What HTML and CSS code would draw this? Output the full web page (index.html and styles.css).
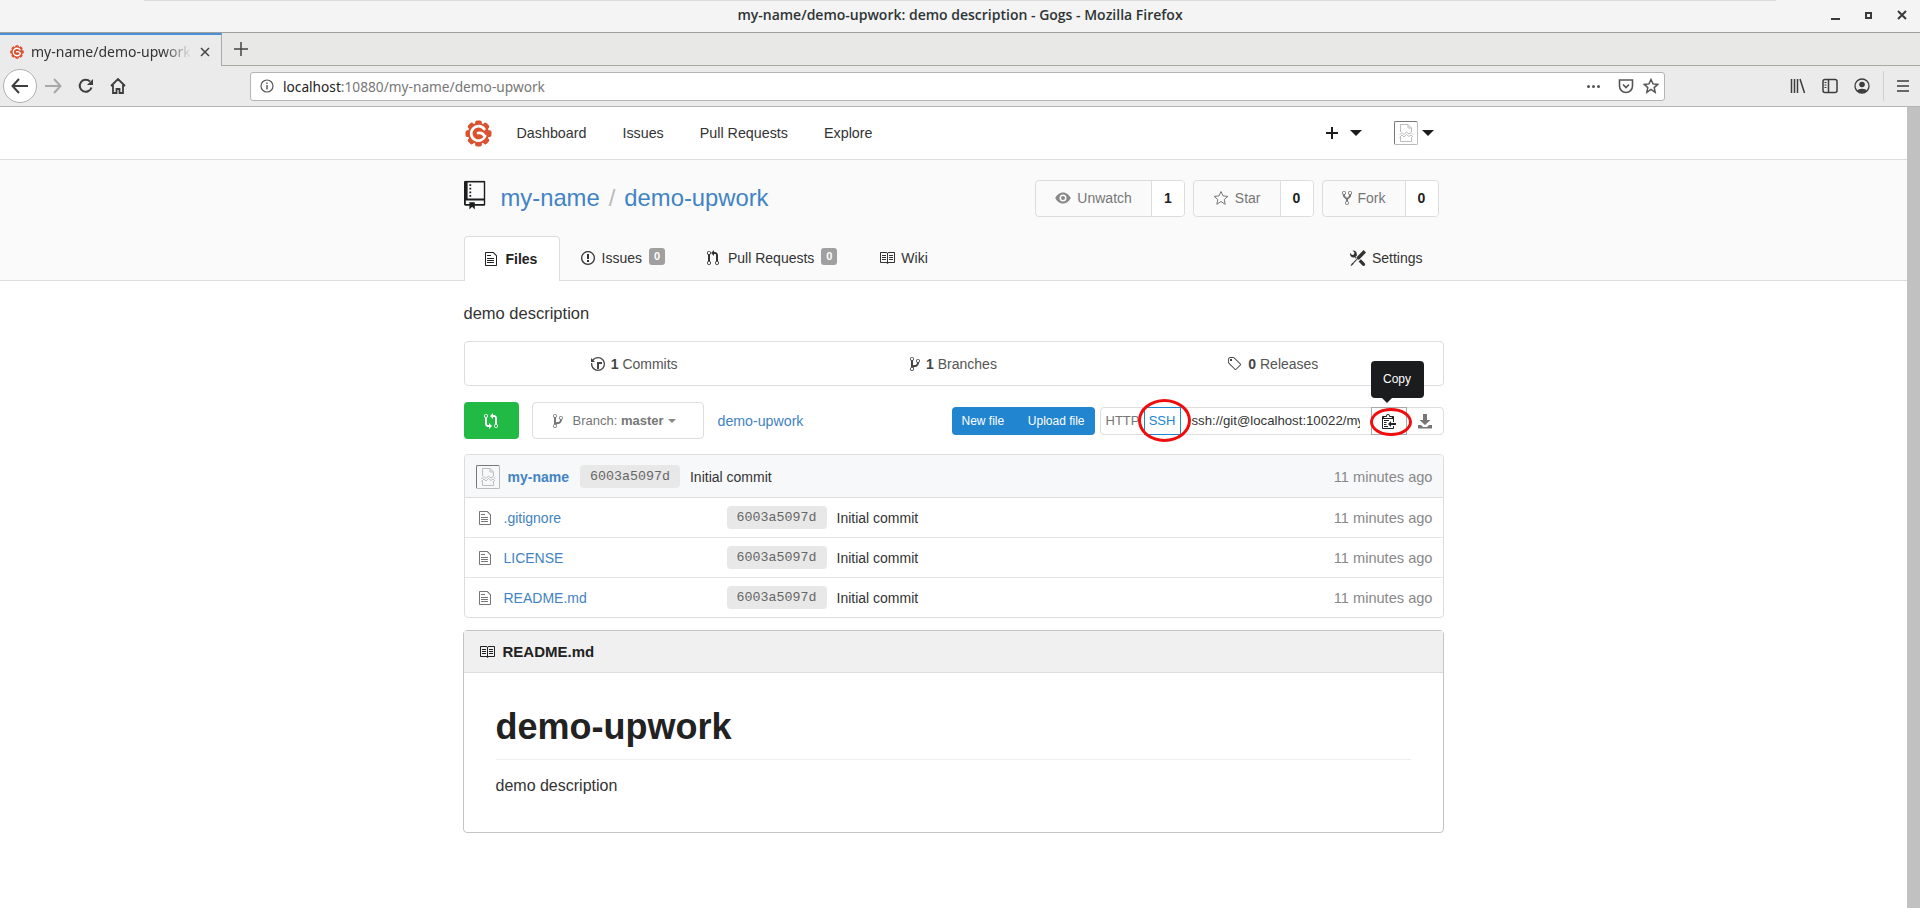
FILE: index.html
```html
<!DOCTYPE html>
<html>
  <head>
    <meta http-equiv="Content-Type" content="text/html;charset=utf-8" />
    <title>my-name/demo-upwork: demo description - Gogs</title>
    <link rel="stylesheet" href="styles.css">
  </head>

  <body>
    <!-- octicons, used through <use> further down -->
    <svg class="sprite" xmlns="http://www.w3.org/2000/svg">
      <symbol id="oct-repo" viewBox="0 0 12 16"><path d="M4 9H3V8h1v1zm0-3H3v1h1V6zm0-2H3v1h1V4zm0-2H3v1h1V2zm8-1v12c0 .55-.45 1-1 1H6v2l-1.5-1.5L3 16v-2H1c-.55 0-1-.45-1-1V1c0-.55.45-1 1-1h10c.55 0 1 .45 1 1zm-1 10H1v2h2v-1h3v1h5v-2zm0-10H2v9h9V1z"/></symbol>
      <symbol id="oct-file" viewBox="0 0 12 16"><path d="M6 5H2V4h4v1zM2 8h7V7H2v1zm0 2h7V9H2v1zm0 2h7v-1H2v1zm10-7.500V14c0 .55-.45 1-1 1H1c-.55 0-1-.45-1-1V2c0-.55.45-1 1-1h7.500L12 4.500zM11 5L8 2H1v12h10V5z"/></symbol>
      <symbol id="oct-issue" viewBox="0 0 14 16"><path d="M7 2.300c3.140 0 5.700 2.560 5.700 5.700s-2.560 5.700-5.700 5.700A5.710 5.710 0 0 1 1.300 8c0-3.140 2.560-5.700 5.700-5.700zM7 1C3.140 1 0 4.140 0 8s3.140 7 7 7 7-3.140 7-7-3.140-7-7-7zm1 3H6v5h2V4zm0 6H6v2h2v-2z"/></symbol>
      <symbol id="oct-pr" viewBox="0 0 12 16"><path d="M11 11.280V5c-.03-.78-.34-1.470-.94-2.060C9.460 2.350 8.780 2.030 8 2H7V0L4 3l3 3V4h1c.27.02.48.11.69.31.21.2.3.42.31.69v6.280A1.993 1.993 0 0 0 10 15a1.993 1.993 0 0 0 1-3.720zm-1 2.920c-.66 0-1.200-.55-1.200-1.200 0-.65.55-1.200 1.200-1.200.65 0 1.200.55 1.200 1.200 0 .65-.55 1.200-1.200 1.200zM4 3c0-1.110-.89-2-2-2a1.993 1.993 0 0 0-1 3.720v6.560A1.993 1.993 0 0 0 2 15a1.993 1.993 0 0 0 1-3.720V4.720c.59-.34 1-.98 1-1.720zm-.8 10c0 .66-.55 1.200-1.200 1.200-.65 0-1.200-.55-1.200-1.200 0-.65.55-1.200 1.200-1.200.65 0 1.200.55 1.200 1.200zM2 4.200C1.340 4.200.8 3.650.8 3c0-.65.55-1.200 1.200-1.200.65 0 1.200.55 1.200 1.200 0 .65-.55 1.200-1.200 1.200z"/></symbol>
      <symbol id="oct-book" viewBox="0 0 16 16"><path d="M3 5h4v1H3V5zm0 3h4V7H3v1zm0 2h4V9H3v1zm11-5h-4v1h4V5zm0 2h-4v1h4V7zm0 2h-4v1h4V9zm2-6v9c0 .55-.45 1-1 1H9.500l-1 1-1-1H2c-.55 0-1-.45-1-1V3c0-.55.45-1 1-1h5.500l1 1 1-1H15c.55 0 1 .45 1 1zm-8 .5L7.500 3H2v9h6V3.500zm7-.5H9.500l-.5.5V12h6V3z"/></symbol>
      <symbol id="oct-branch" viewBox="0 0 10 16"><path d="M10 5c0-1.110-.89-2-2-2a1.993 1.993 0 0 0-1 3.720v.3c-.02.52-.23.98-.63 1.380-.4.4-.86.61-1.380.63-.83.02-1.480.16-2 .45V4.720a1.993 1.993 0 0 0-1-3.720C.88 1 0 1.890 0 3a2 2 0 0 0 1 1.720v6.560c-.59.35-1 .99-1 1.720 0 1.110.89 2 2 2 1.110 0 2-.89 2-2 0-.53-.2-1-.53-1.360.09-.06.48-.41.59-.47.25-.11.56-.17.94-.17 1.050-.05 1.950-.45 2.750-1.250S8.950 7.770 9 6.730h-.02C9.590 6.370 10 5.730 10 5zM2 1.800c.66 0 1.200.55 1.200 1.200 0 .65-.55 1.200-1.200 1.200C1.350 4.200.8 3.650.8 3c0-.65.55-1.200 1.200-1.200zm0 12.410c-.66 0-1.200-.55-1.200-1.200 0-.65.55-1.200 1.200-1.200.65 0 1.200.55 1.200 1.200 0 .65-.55 1.200-1.200 1.200zm6-8c-.66 0-1.200-.55-1.200-1.200 0-.65.55-1.200 1.200-1.200.65 0 1.200.55 1.200 1.200 0 .65-.55 1.200-1.200 1.200z"/></symbol>
      <symbol id="oct-tools" viewBox="0 0 16 16"><path d="M4.480 7.270c.26.26 1.280 1.330 1.280 1.330l.56-.58-.88-.91 1.690-1.800s-.76-.74-.43-.45c.32-1.190.03-2.510-.87-3.440C4.930.5 3.660.2 2.520.51l1.930 2-.51 1.960-1.890.52-1.930-2C-.19 4.170.1 5.480 1 6.400c.94.98 2.290 1.260 3.480.87zm6.440 1.940l-2.330 2.300 3.840 3.980c.31.33.73.49 1.140.49.41 0 .82-.16 1.140-.49.63-.65.63-1.700 0-2.350l-3.790-3.930zM16 2.530L13.550 0 6.330 7.460l.88.91-4.310 4.460-.99.53-1.390 2.270.35.37 2.200-1.440.51-1.020L7.900 9.080l.88.91L16 2.530z"/></symbol>
      <symbol id="oct-history" viewBox="0 0 14 16"><path d="M8 13H6V6h5v2H8v5zM7 1C4.810 1 2.870 2.020 1.590 3.590L0 2v4h4L2.500 4.500C3.550 3.170 5.170 2.300 7 2.300c3.140 0 5.700 2.560 5.700 5.700s-2.560 5.700-5.700 5.700A5.710 5.710 0 0 1 1.300 8c0-.34.03-.67.09-1H.08C.03 7.330 0 7.660 0 8c0 3.860 3.140 7 7 7s7-3.140 7-7-3.140-7-7-7z"/></symbol>
      <symbol id="oct-tag" viewBox="0 0 15 16"><path d="M7.730 1.730C7.260 1.260 6.620 1 5.960 1H3.500C2.130 1 1 2.130 1 3.500v2.470c0 .66.27 1.300.73 1.770l6.060 6.060c.39.39 1.020.39 1.410 0l4.590-4.590a.996.996 0 0 0 0-1.410L7.730 1.730zM2.380 7.090c-.31-.3-.47-.7-.47-1.130V3.500c0-.88.72-1.590 1.590-1.590h2.470c.42 0 .83.16 1.130.47l6.140 6.130-4.730 4.730-6.130-6.150zM3.010 3h2v2H3V3h.01z"/></symbol>
      <symbol id="oct-fork" viewBox="0 0 10 16"><path d="M8 1a1.993 1.993 0 0 0-1 3.720V6L5 8 3 6V4.720A1.993 1.993 0 0 0 2 1a1.993 1.993 0 0 0-1 3.720V6.500l3 3v1.780A1.993 1.993 0 0 0 5 15a1.993 1.993 0 0 0 1-3.720V9.500l3-3V4.720A1.993 1.993 0 0 0 8 1zM2 4.200C1.340 4.200.8 3.650.8 3c0-.65.55-1.200 1.200-1.200.65 0 1.200.55 1.200 1.200 0 .65-.55 1.200-1.200 1.200zm3 10c-.66 0-1.200-.55-1.200-1.200 0-.65.55-1.200 1.200-1.200.65 0 1.200.55 1.200 1.200 0 .65-.55 1.200-1.200 1.200zm3-10c-.66 0-1.200-.55-1.200-1.200 0-.65.55-1.200 1.200-1.200.65 0 1.200.55 1.200 1.200 0 .65-.55 1.200-1.200 1.200z"/></symbol>
      <symbol id="oct-clippy" viewBox="0 0 14 16"><path d="M2 13h4v1H2v-1zm5-6H2v1h5V7zm2 3V8l-3 3 3 3v-2h5v-2H9zM4.500 9H2v1h2.500V9zM2 12h2.500v-1H2v1zm9 1h1v2c-.02.28-.11.52-.3.7-.19.18-.42.28-.7.3H1c-.55 0-1-.45-1-1V4c0-.55.45-1 1-1h3c0-1.110.89-2 2-2 1.110 0 2 .89 2 2h3c.55 0 1 .45 1 1v5h-1V6H1v9h10v-2zM2 5h8c0-.55-.45-1-1-1H8c-.55 0-1-.45-1-1s-.45-1-1-1-1 .45-1 1-.45 1-1 1H3c-.55 0-1 .45-1 1z"/></symbol>
      <symbol id="oct-compare" viewBox="0 0 14 16"><path d="M5 12H4c-.27-.02-.48-.11-.69-.31-.21-.2-.3-.42-.31-.69V4.720A1.993 1.993 0 0 0 2 1a1.993 1.993 0 0 0-1 3.720V11c.03.78.34 1.470.94 2.060.6.59 1.280.91 2.060.94h1v2l3-3-3-3v2zM2 1.800c.66 0 1.200.55 1.200 1.200 0 .65-.55 1.200-1.200 1.200C1.350 4.200.8 3.650.8 3c0-.65.55-1.200 1.200-1.200zm11 9.480V5c-.03-.78-.34-1.470-.94-2.060-.6-.59-1.280-.91-2.060-.94H9V0L6 3l3 3V4h1c.27.02.48.11.69.31.21.2.3.42.31.69v6.280A1.993 1.993 0 0 0 12 15a1.993 1.993 0 0 0 1-3.720zm-1 2.920c-.66 0-1.200-.55-1.200-1.200 0-.65.55-1.200 1.200-1.200.65 0 1.200.55 1.200 1.200 0 .65-.55 1.200-1.200 1.200z"/></symbol>
      <symbol id="gogs-logo" viewBox="0 0 28 28">
        <g fill="#da5230">
          <circle cx="14" cy="14" r="11"/>
          <rect x="10.500" y=".5" width="7" height="27" rx="2"/>
          <rect x="10.500" y=".5" width="7" height="27" rx="2" transform="rotate(45 14 14)"/>
          <rect x="10.500" y=".5" width="7" height="27" rx="2" transform="rotate(90 14 14)"/>
          <rect x="10.500" y=".5" width="7" height="27" rx="2" transform="rotate(135 14 14)"/>
        </g>
        <path fill="none" stroke="#fff" stroke-width="2.800" stroke-linecap="round" d="M20 9.500A7.500 7.500 0 1 0 21 16.500M13.500 13.500c3 -.8 5.500 .5 7 3.500"/>
      </symbol>
      <symbol id="broken-img" viewBox="0 0 16 18"><path fill="none" stroke="#bdbdbd" d="M2.500 8V.5h7.500l3.500 3.500v4M10 .5v3.500h3.500M2.500 13v4.500h11V13M1.500 11l2.500-2.500 2 2 2.500-2.500 2.500 2 2-1.500 2 2M1.500 13.500l2.500-2.500 2 2 2.500-2.500 2.500 2 2-1.500 2 2"/></symbol>
    </svg>

    <div class="titlebar">
      <div class="titlebar-edge"></div>
      <div class="titlebar-text">my-name/demo-upwork: demo description - Gogs - Mozilla Firefox</div>
      <div class="window-btns">
        <span class="win-min"></span>
        <span class="win-max"></span>
        <svg class="win-close" width="10" height="10" viewBox="0 0 10 10"><path d="M1 1l8 8M9 1l-8 8" stroke="#3a3a3a" stroke-width="2"/></svg>
      </div>
    </div>

    <div class="tabstrip">
      <div class="tab">
        <svg class="tab-favicon" width="14" height="14"><use href="#gogs-logo"/></svg>
        <span class="tab-label">my-name/demo-upwork: demo description - Gogs</span>
        <svg width="12" height="12" viewBox="0 0 12 12"><path d="M2 2l8 8M10 2l-8 8" stroke="#444" stroke-width="1.500"/></svg>
      </div>
      <svg class="new-tab" width="14" height="14" viewBox="0 0 14 14"><path d="M7 0v14M0 7h14" stroke="#444" stroke-width="1.500"/></svg>
    </div>

    <div class="toolbar">
      <div class="back-btn">
        <svg width="18" height="16" viewBox="0 0 18 16"><path d="M8 1L1.500 8 8 15M2 8h15" fill="none" stroke="#3d3d3d" stroke-width="2"/></svg>
      </div>
      <svg class="tool-icon" width="18" height="16" viewBox="0 0 18 16"><path d="M10 1l6.500 7-6.500 7M16 8H1" fill="none" stroke="#a8a8a8" stroke-width="2"/></svg>
      <svg class="tool-icon" width="16" height="16" viewBox="0 0 16 16"><path d="M13.500 9.500A6 6 0 1 1 12 3.500" fill="none" stroke="#3d3d3d" stroke-width="2"/><path d="M15 1v6H9z" fill="#3d3d3d"/></svg>
      <svg class="tool-icon" width="16" height="16" viewBox="0 0 16 16"><path d="M1 8l7-7 7 7M3 7v8h3.500v-4h3v4H13V7" fill="none" stroke="#3d3d3d" stroke-width="1.800"/></svg>

      <div class="urlbar">
        <svg width="14" height="14" viewBox="0 0 14 14"><circle cx="7" cy="7" r="6" fill="none" stroke="#555" stroke-width="1.200"/><path d="M7 6v4.500M7 3.500v1.500" stroke="#555" stroke-width="1.400"/></svg>
        <span class="url-text"><span class="url-host">localhost</span>:10880/my-name/demo-upwork</span>
        <span class="url-dots"></span>
        <svg width="16" height="16" viewBox="0 0 16 16"><path d="M1.500 2h13v6a6.500 6.500 0 0 1-13 0z" fill="none" stroke="#555" stroke-width="1.600"/><path d="M5 6.500l3 3 3-3" fill="none" stroke="#555" stroke-width="1.600"/></svg>
        <svg width="16" height="16" viewBox="0 0 16 16"><path d="M8 1.500l2 4.400 4.700.5-3.500 3.200 1 4.700L8 11.500l-4.200 2.800 1-4.700L1.300 6.400 6 5.900z" fill="none" stroke="#555" stroke-width="1.500"/></svg>
      </div>

      <svg class="tool-icon" width="16" height="16" viewBox="0 0 16 16"><path d="M1.500 1v14M4.500 1v14M7.500 1v14M10 1l4.500 14" fill="none" stroke="#3d3d3d" stroke-width="1.500"/></svg>
      <svg class="tool-icon" width="16" height="16" viewBox="0 0 16 16"><rect x="1" y="1.500" width="14" height="13" rx="2" fill="none" stroke="#3d3d3d" stroke-width="1.500"/><path d="M6.500 2v12" stroke="#3d3d3d" stroke-width="1.500"/><path d="M2.500 4.500h2M2.500 7h2M2.500 9.500h2" stroke="#3d3d3d"/></svg>
      <svg class="account-icon" width="16" height="16" viewBox="0 0 16 16"><circle cx="8" cy="8" r="7" fill="none" stroke="#3d3d3d" stroke-width="1.300"/><circle cx="8" cy="6.500" r="2.800" fill="#3d3d3d"/><path d="M3 13c1-3 9-3 10 0a7 7 0 0 1-10 0z" fill="#3d3d3d"/></svg>
      <span class="tool-sep"></span>
      <svg class="menu-icon" width="14" height="14" viewBox="0 0 14 14"><path d="M1 2h12M1 7h12M1 12h12" stroke="#3d3d3d" stroke-width="1.600"/></svg>
    </div>

    <div class="viewport">
      <div class="page">
        <div class="head-nav">
          <div class="container head-inner">
            <svg class="logo" width="27" height="27"><use href="#gogs-logo"/></svg>
            <a class="head-link" href="#">Dashboard</a>
            <a class="head-link" href="#">Issues</a>
            <a class="head-link" href="#">Pull Requests</a>
            <a class="head-link" href="#">Explore</a>
            <div class="head-right">
              <svg class="plus-icon" width="14" height="14" viewBox="0 0 14 14"><path d="M7 1v12M1 7h12" stroke="#1b1c1d" stroke-width="2"/></svg>
              <span class="caret caret-plus"></span>
              <span class="avatar avatar-head"><svg width="16" height="18"><use href="#broken-img"/></svg></span>
              <span class="caret"></span>
            </div>
          </div>
        </div>

        <div class="repo-head">
          <div class="container">
            <div class="repo-title-row">
              <svg class="repo-icon" width="24" height="32"><use href="#oct-repo"/></svg>
              <a class="repo-link" href="#">my-name</a>
              <span class="repo-slash">/</span>
              <a class="repo-link" href="#">demo-upwork</a>
              <div class="repo-actions">
                <div class="action-btn">
                  <span class="action-main">
                    <svg width="16" height="12" viewBox="0 0 16 12"><path d="M8 .5C4.500.5 1.700 3 .2 6c1.500 3 4.300 5.500 7.800 5.500s6.300-2.500 7.800-5.500C14.300 3 11.500.5 8 .5zm0 9a3.500 3.500 0 1 1 0-7 3.500 3.500 0 0 1 0 7zM8 4a2 2 0 1 0 0 4 2 2 0 0 0 0-4z" fill="#888"/></svg>
                    Unwatch
                  </span>
                  <span class="action-count">1</span>
                </div>
                <div class="action-btn">
                  <span class="action-main">
                    <svg width="16" height="16" viewBox="0 0 16 16"><path d="M8 1.500l2 4.400 4.800.5-3.600 3.200 1 4.700L8 11.500l-4.200 2.800 1-4.700L1.200 6.400 6 5.900z" fill="none" stroke="#767676"/></svg>
                    Star
                  </span>
                  <span class="action-count">0</span>
                </div>
                <div class="action-btn action-btn-last">
                  <span class="action-main">
                    <svg class="oct-grey" width="10" height="16"><use href="#oct-fork"/></svg>
                    Fork
                  </span>
                  <span class="action-count">0</span>
                </div>
              </div>
            </div>

            <div class="repo-tabs">
              <a class="repo-tab active" href="#"><svg class="gap-9" width="12" height="16"><use href="#oct-file"/></svg>Files</a>
              <a class="repo-tab" href="#"><svg class="gap-7" width="14" height="16"><use href="#oct-issue"/></svg>Issues<span class="count-label">0</span></a>
              <a class="repo-tab" href="#"><svg class="gap-9" width="12" height="16"><use href="#oct-pr"/></svg>Pull Requests<span class="count-label">0</span></a>
              <a class="repo-tab" href="#"><svg class="gap-6" width="16" height="16"><use href="#oct-book"/></svg>Wiki</a>
              <a class="repo-tab settings-tab" href="#"><svg class="gap-6" width="16" height="16"><use href="#oct-tools"/></svg>Settings</a>
            </div>
          </div>
        </div>

        <div class="container repo-body">
          <p class="repo-desc">demo description</p>

          <div class="stats">
            <div class="stat"><svg class="oct-dark" width="14" height="16"><use href="#oct-history"/></svg><b>1</b> Commits</div>
            <div class="stat"><svg class="oct-dark" width="10" height="16"><use href="#oct-branch"/></svg><b>1</b> Branches</div>
            <div class="stat"><svg class="oct-dark" width="15" height="16"><use href="#oct-tag"/></svg><b>0</b> Releases</div>
          </div>

          <div class="file-bar">
            <span class="compare-btn"><svg width="14" height="16"><use href="#oct-compare"/></svg></span>
            <span class="branch-btn">
              <svg class="oct-grey" width="10" height="16"><use href="#oct-branch"/></svg>
              <span>Branch: <b>master</b></span>
              <span class="branch-caret"></span>
            </span>
            <a class="crumb" href="#">demo-upwork</a>

            <div class="file-bar-right">
              <div class="blue-group">
                <a href="#">New file</a>
                <a href="#">Upload file</a>
              </div>
              <div class="clone">
                <span class="clone-proto">HTTP</span>
                <span class="clone-proto clone-active">SSH</span>
                <span class="clone-url">ssh://git@localhost:10022/my-name/demo-upwork.git</span>
                <span class="clone-btn clone-copy"><svg width="14" height="16"><use href="#oct-clippy"/></svg></span>
                <span class="clone-btn">
                  <svg width="16" height="16" viewBox="0 0 16 16"><path d="M6 1h4v6h3.500L8 12 2.500 7H6zM1 12h3l2 2h4l2-2h3v3.500H1z" fill="#767676"/></svg>
                </span>

                <div class="tooltip">Copy</div>
                <span class="ring ring-ssh"></span>
                <span class="ring ring-copy"></span>
              </div>
            </div>
          </div>

          <div class="file-table">
            <div class="commit-row">
              <span class="avatar"><svg width="16" height="18"><use href="#broken-img"/></svg></span>
              <a class="commit-user" href="#">my-name</a>
              <span class="sha">6003a5097d</span>
              <span class="commit-msg">Initial commit</span>
              <span class="age">11 minutes ago</span>
            </div>
            <div class="file-row">
              <svg class="oct-grey" width="12" height="16"><use href="#oct-file"/></svg>
              <a class="file-name" href="#">.gitignore</a>
              <span class="sha">6003a5097d</span>
              <span class="commit-msg">Initial commit</span>
              <span class="age">11 minutes ago</span>
            </div>
            <div class="file-row">
              <svg class="oct-grey" width="12" height="16"><use href="#oct-file"/></svg>
              <a class="file-name" href="#">LICENSE</a>
              <span class="sha">6003a5097d</span>
              <span class="commit-msg">Initial commit</span>
              <span class="age">11 minutes ago</span>
            </div>
            <div class="file-row">
              <svg class="oct-grey" width="12" height="16"><use href="#oct-file"/></svg>
              <a class="file-name" href="#">README.md</a>
              <span class="sha">6003a5097d</span>
              <span class="commit-msg">Initial commit</span>
              <span class="age">11 minutes ago</span>
            </div>
          </div>

          <div class="readme">
            <div class="readme-head"><svg width="16" height="16"><use href="#oct-book"/></svg>README.md</div>
            <div class="readme-body">
              <h1>demo-upwork</h1>
              <p>demo description</p>
            </div>
          </div>
        </div>
      </div>

      <div class="scrollbar"></div>
    </div>
  </body>
</html>
```

FILE: styles.css
```css
* {
  box-sizing: border-box;
}

html,
body {
  height: 100%;
}

body {
  margin: 0;
  display: flex;
  flex-direction: column;
  overflow: hidden;
  font-family: "Liberation Sans", Arial, sans-serif;
  font-size: 14px;
  color: #333;
  background: #fff;
}

a {
  text-decoration: none;
  color: #4183c4;
}

svg {
  flex: none;
  fill: currentColor;
}

.sprite {
  display: none;
}

/* browser window */

.titlebar {
  height: 33px;
  flex: none;
  display: flex;
  flex-direction: column;
  position: relative;
  background: #f4f4f4;
  border-bottom: 1px solid #a0a09c;
}

.titlebar-edge {
  height: 1px;
  margin: 0 144px;
  background: #dcdcdc;
}

.titlebar-text {
  flex: 1;
  text-align: center;
  line-height: 27px;
  font-family: "Open Sans", sans-serif;
  font-weight: 600;
  font-size: 14px;
  color: #2e3436;
}

.window-btns {
  position: absolute;
  top: 10px;
  right: 13px;
  display: flex;
  align-items: center;
  gap: 25px;
}

.win-min {
  width: 9px;
  height: 2px;
  margin-top: 7px;
  background: #3a3a3a;
}

.win-max {
  width: 7px;
  height: 7px;
  border: 2px solid #3a3a3a;
}

.tabstrip {
  height: 33px;
  flex: none;
  display: flex;
  align-items: center;
  background: #e8e8e7;
  border-bottom: 1px solid #a8a8a4;
}

.tab {
  width: 222px;
  height: 33px;
  padding: 3px 10px 0;
  display: flex;
  align-items: center;
  gap: 7px;
  background: #ebebeb;
  border-top: 2px solid #4a90d9;
  border-right: 1px solid #a8a8a4;
  font-family: "Noto Sans", sans-serif;
  font-size: 14px;
  color: #333;
}

.tab-label {
  flex: 1;
  overflow: hidden;
  white-space: nowrap;
  -webkit-mask-image: linear-gradient(to right, #000 82%, transparent);
  mask-image: linear-gradient(to right, #000 82%, transparent);
}

.new-tab {
  margin-left: 12px;
}

.toolbar {
  height: 41px;
  flex: none;
  display: flex;
  align-items: center;
  padding-left: 3px;
  background: #ebebeb;
  border-bottom: 1px solid #b4b4b0;
}

.back-btn {
  width: 34px;
  height: 34px;
  display: flex;
  align-items: center;
  justify-content: center;
  margin-right: 7px;
  background: #fff;
  border: 1px solid #b0b0b0;
  border-radius: 50%;
}

.tool-icon {
  margin-right: 16px;
}

.urlbar {
  width: 1415px;
  height: 29px;
  margin: 0 125px 0 108px;
  padding: 0 5px 0 9px;
  display: flex;
  align-items: center;
  gap: 9px;
  background: #fff;
  border: 1px solid #b4b4b0;
  border-radius: 3px;
}

.url-text {
  flex: 1;
  font-family: "Noto Sans", sans-serif;
  font-size: 13.700px;
  color: #777;
}

.url-host {
  color: #222;
}

.url-dots {
  width: 3px;
  height: 3px;
  margin-right: 14px;
  border-radius: 50%;
  background: #555;
  box-shadow: -5px 0 #555, 5px 0 #555;
}

.account-icon {
  margin-right: 13px;
}

.tool-sep {
  width: 1px;
  height: 30px;
  margin-right: 12px;
  background: #d0d0d0;
}

.viewport {
  flex: 1;
  display: flex;
  min-height: 0;
}

.page {
  flex: 1;
  min-width: 0;
}

.scrollbar {
  width: 13px;
  background: #c1c1c1;
}

/* gogs page */

.container {
  width: 980px;
  margin: 0 auto;
}

.head-nav {
  height: 53px;
  border-bottom: 1px solid #ddd;
}

.head-inner {
  height: 52px;
  display: flex;
  align-items: center;
}

.logo {
  margin: 0 25px 0 1px;
}

.head-link {
  margin-right: 36px;
  font-size: 14.300px;
  color: #333;
}

.head-right {
  margin-left: auto;
  margin-right: 10px;
  display: flex;
  align-items: center;
}

.caret {
  width: 0;
  height: 0;
  border-style: solid;
  border-width: 6px 6px 0;
  border-color: #1b1c1d transparent transparent;
}

.caret-plus {
  margin: 0 32px 0 11px;
}

.avatar {
  width: 24px;
  height: 24px;
  display: flex;
  align-items: center;
  justify-content: center;
  border: 1px solid;
  border-color: #777 #bbb #bbb #777;
  border-radius: 2px;
  flex: none;
}

.avatar-head {
  margin-right: 4px;
}

.repo-head {
  height: 121px;
  background: #fafafa;
  border-bottom: 1px solid #ddd;
}

.repo-title-row {
  height: 76px;
  display: flex;
  align-items: center;
}

.repo-icon {
  color: #1b1c1d;
  margin-right: 13px;
  transform: translateY(-3px) scale(.9);
  transform-origin: left center;
}

.repo-link {
  font-size: 23.800px;
}

.repo-slash {
  margin: 0 9px;
  font-size: 24px;
  color: #bbb;
}

.repo-actions {
  margin-left: auto;
  display: flex;
  gap: 8px;
  margin-right: 5px;
}

.action-btn {
  height: 37px;
  display: flex;
  border: 1px solid #ddd;
  border-radius: 4px;
  overflow: hidden;
}

.action-main {
  padding: 0 19px;
  display: flex;
  align-items: center;
  gap: 6px;
  color: #767676;
  border-right: 1px solid #ddd;
}

.action-count {
  width: 32px;
  display: flex;
  align-items: center;
  justify-content: center;
  background: #fff;
  font-weight: bold;
  color: #222;
}

.oct-grey {
  color: #767676;
}

.oct-dark {
  color: #444;
}

.repo-tabs {
  height: 44px;
  display: flex;
}

.repo-tab {
  padding: 0 21px;
  display: flex;
  align-items: center;
  color: #333;
}

.repo-tab.active {
  width: 96px;
  height: 45px;
  padding: 0 0 0 20px;
  font-weight: bold;
  color: #222;
  background: #fff;
  border: 1px solid #ddd;
  border-bottom: none;
  border-radius: 4px 4px 0 0;
}

.settings-tab {
  margin-left: auto;
}

.gap-9 {
  margin-right: 9px;
}

.gap-7 {
  margin-right: 7px;
}

.gap-6 {
  margin-right: 6px;
}

.count-label {
  width: 16px;
  height: 17px;
  margin: -4px 0 0 7px;
  text-align: center;
  line-height: 17px;
  font-size: 11px;
  font-weight: bold;
  color: #fff;
  background: #a0a0a0;
  border-radius: 3px;
}

.repo-body {
  padding-bottom: 20px;
}

.repo-desc {
  margin: 0;
  height: 60px;
  line-height: 64px;
  font-size: 16.500px;
}

.stats {
  height: 45px;
  padding: 0 10px;
  display: grid;
  grid-template-columns: repeat(3, 1fr);
  align-items: center;
  border: 1px solid #ddd;
  border-radius: 4px;
}

.stat {
  text-align: center;
  color: #555;
}

.stat svg {
  margin-right: 6px;
  vertical-align: -3px;
}

.stat b {
  color: #444;
}

.file-bar {
  margin-top: 16px;
  height: 37px;
  display: flex;
  align-items: center;
}

.compare-btn {
  width: 55px;
  height: 37px;
  display: flex;
  align-items: center;
  justify-content: center;
  color: #fff;
  background: #21ba45;
  border-radius: 4px;
}

.branch-btn {
  width: 172px;
  height: 37px;
  margin: 0 14px 0 13px;
  padding-left: 20px;
  display: flex;
  align-items: center;
  gap: 10px;
  font-size: 13px;
  color: #767676;
  border: 1px solid #ddd;
  border-radius: 4px;
}

.branch-caret {
  margin-left: -6px;
  width: 0;
  height: 0;
  border-style: solid;
  border-width: 4px 4px 0;
  border-color: #888 transparent transparent;
}

.crumb {
  font-size: 14.200px;
}

.file-bar-right {
  margin-left: auto;
  display: flex;
  align-items: center;
  gap: 5px;
}

.blue-group {
  height: 28px;
  width: 143px;
  padding: 0 10px;
  display: flex;
  align-items: center;
  justify-content: space-between;
  background: #2185d0;
  border-radius: 4px;
}

.blue-group a {
  font-size: 12px;
  color: #fff;
}

.clone {
  width: 344px;
  height: 28px;
  position: relative;
  display: flex;
  align-items: stretch;
  font-size: 13px;
  border: 1px solid #ddd;
  border-radius: 4px;
}

.clone-proto {
  width: 43px;
  padding-left: 5px;
  line-height: 26px;
  color: #767676;
}

.clone-active {
  width: 37px;
  margin: -1px 0;
  padding: 0;
  text-align: center;
  line-height: 26px;
  color: #2185d0;
  border: 1px solid #2185d0;
}

.clone-url {
  width: 190px;
  padding-left: 11px;
  overflow: hidden;
  white-space: nowrap;
  font-size: 13.200px;
  line-height: 26px;
  color: #333;
  border-right: 11px solid #fff;
}

.clone-btn {
  flex: 1;
  display: flex;
  align-items: center;
  justify-content: center;
}

.clone-copy {
  flex: none;
  width: 36px;
  margin: -1px 0;
  color: #222;
  border: 1px solid #aaa;
}

.tooltip {
  position: absolute;
  left: 270px;
  top: -47px;
  width: 53px;
  height: 37px;
  text-align: center;
  line-height: 37px;
  font-size: 12px;
  color: #fff;
  background: #1b1c1d;
  border-radius: 4px;
}

.tooltip::after {
  content: "";
  position: absolute;
  left: 11px;
  bottom: -5px;
  width: 0;
  height: 0;
  border-style: solid;
  border-width: 5px 5px 0;
  border-color: #1b1c1d transparent transparent;
}

.ring {
  position: absolute;
  border: 3px solid #f00d0d;
  border-radius: 50%;
}

.ring-ssh {
  left: 37px;
  top: -9px;
  width: 53px;
  height: 43px;
}

.ring-copy {
  left: 269px;
  top: 0;
  width: 42px;
  height: 28px;
}

.file-table {
  margin-top: 15px;
  border: 1px solid #ddd;
  border-radius: 4px;
}

.commit-row,
.file-row {
  display: flex;
  align-items: center;
}

.commit-row {
  height: 43px;
  padding: 1px 10px 0 11px;
  background: #f7f8fa;
  border-bottom: 1px solid #ddd;
  border-radius: 4px 4px 0 0;
}

.file-row {
  height: 40px;
  padding: 0 10px 0 14px;
  border-bottom: 1px solid #e6e6e6;
}

.file-row:last-child {
  height: 39px;
  border-bottom: none;
}

.commit-user {
  margin: 0 11px 0 8px;
  font-weight: bold;
}

.file-name {
  width: 223px;
  margin-left: 13px;
}

.sha {
  width: 100px;
  height: 23px;
  text-align: center;
  line-height: 23px;
  font-family: "Liberation Mono", monospace;
  font-size: 13.300px;
  color: #666;
  background: #e8e8e8;
  border-radius: 4px;
}

.commit-msg {
  margin-left: 10px;
}

.age {
  margin-left: auto;
  font-size: 14.600px;
  color: #888;
}

.readme {
  margin: 12px 0 0 -1px;
  width: 981px;
  border: 1px solid #c4c4c4;
  border-radius: 4px;
}

.readme-head {
  height: 42px;
  padding-left: 15px;
  display: flex;
  align-items: center;
  gap: 8px;
  font-size: 15px;
  font-weight: bold;
  color: #222;
  background: #f0f0f0;
  border-bottom: 1px solid #ddd;
}

.readme-body {
  height: 159px;
  padding: 33px 32px 0;
}

.readme-body h1 {
  margin: 0;
  padding-bottom: 11px;
  font-size: 36px;
  line-height: 42px;
  color: #222;
  border-bottom: 1px solid #eee;
}

.readme-body p {
  margin: 14px 0 0;
  font-size: 16px;
  line-height: 24px;
}
```
